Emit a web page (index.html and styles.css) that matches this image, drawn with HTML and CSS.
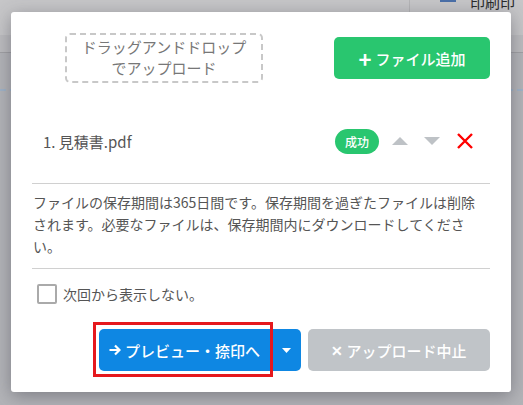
FILE: index.html
```html
<!DOCTYPE html>
<html lang="ja">
<head>
<meta charset="utf-8">
<link rel="stylesheet" href="styles.css">
</head>
<body>
<div class="page">
  <div class="bg-header">
    <div class="bg-divider"></div>
    <svg class="bg-icon" width="16" height="10" viewBox="0 0 16 10"><rect x="2" y="0" width="12" height="3" fill="#4a6fa8"/><rect x="0" y="4" width="16" height="2" fill="#4a6fa8"/></svg>
    <span class="bg-title">印刷印</span>
  </div>
  <div class="bg-subbar"></div>
  <div class="bg-dash"></div>
</div>

<div class="modal">
  <div class="top-row">
    <div class="dropzone">ドラッグアンドドロップ<br>でアップロード</div>
    <button class="btn btn-green"><span class="plus">+</span>ファイル追加</button>
  </div>

  <div class="file-row">
    <span class="file-name">1. 見積書.pdf</span>
    <div class="file-actions">
      <span class="badge">成功</span>
      <svg class="arrow" width="16" height="8" viewBox="0 0 16 8"><polygon points="0,8 8,0 16,8" fill="#bec2c6"/></svg>
      <svg class="arrow" width="16" height="8" viewBox="0 0 16 8"><polygon points="0,0 16,0 8,8" fill="#bec2c6"/></svg>
      <svg class="remove" width="16" height="16" viewBox="0 0 16 16"><path d="M1 1 L15 15 M15 1 L1 15" stroke="#ff0000" stroke-width="2.4" fill="none"/></svg>
    </div>
  </div>

  <p class="notice">ファイルの保存期間は365日間です。保存期間を過ぎたファイルは削除されます。必要なファイルは、保存期間内にダウンロードしてください。</p>

  <label class="check-row"><span class="checkbox"></span>次回から表示しない。</label>

  <div class="btn-row">
    <div class="split">
      <button class="btn btn-blue btn-main">
        <svg width="12" height="12" viewBox="0 0 12 12"><path d="M0.5 6 H10 M6 1.5 L10.5 6 L6 10.5" stroke="#fff" stroke-width="2.2" fill="none"/></svg>
        プレビュー・捺印へ
        <span class="highlight"></span>
      </button>
      <button class="btn btn-blue btn-toggle"><svg width="9" height="5" viewBox="0 0 9 5"><polygon points="0,0 9,0 4.5,5" fill="#fff"/></svg></button>
    </div>
    <button class="btn btn-grey"><span class="x">✕</span>アップロード中止</button>
  </div>
</div>
</body>
</html>
```

FILE: styles.css
```css
html, body {
  margin: 0;
  padding: 0;
}
body {
  width: 523px;
  height: 405px;
  overflow: hidden;
  background: #b3b4b8;
  font-family: "Noto Sans CJK JP", "Noto Sans", sans-serif;
  position: relative;
}
.page {
  height: 405px;
}
.bg-header {
  height: 35px;
  background: #c6c6c8;
  display: flex;
  justify-content: flex-end;
  align-items: flex-start;
  overflow: hidden;
}
.bg-divider {
  width: 1px;
  height: 35px;
  background: #b4b4b6;
  margin-right: 30px;
}
.bg-icon {
  margin-top: -4px;
  margin-right: 14px;
}
.bg-title {
  font-size: 15px;
  line-height: 15px;
  margin-top: -6px;
  margin-right: 8px;
  color: #2a2a2a;
}
.bg-subbar {
  height: 17px;
  background: #bcbcbf;
  border-bottom: 1px solid #a0a0a4;
}
.bg-dash {
  margin-top: 36px;
  border-top: 2px dashed #9fb3c8;
}

.modal {
  position: absolute;
  left: 11px;
  top: 12px;
  width: 458px;
  height: 338px;
  padding: 21px;
  background: #fff;
  border-radius: 3px;
  box-shadow: 0 4px 18px rgba(60, 60, 70, 0.45);
}
.top-row {
  display: flex;
  justify-content: space-between;
  align-items: flex-start;
  height: 70px;
}
.dropzone {
  margin-left: 33px;
  width: 194px;
  height: 45px;
  border: 2px dashed #c8c8c8;
  border-radius: 5px;
  color: #777;
  font-size: 15px;
  line-height: 21px;
  text-align: center;
  padding-top: 1px;
  box-sizing: content-box;
}
.btn {
  border: none;
  font-family: inherit;
  color: #fff;
  font-size: 15px;
  font-weight: 500;
  display: flex;
  align-items: center;
  justify-content: center;
  padding: 0;
  cursor: pointer;
}
.btn-green {
  margin-top: 4px;
  width: 156px;
  height: 42px;
  background: #29c66f;
  border-radius: 5px;
}
.plus {
  font-size: 22px;
  line-height: 20px;
  font-weight: bold;
  margin-right: 4px;
}
.file-row {
  margin-top: 22px;
  height: 32px;
  display: flex;
  align-items: center;
  justify-content: space-between;
  padding: 0 17px 0 11px;
}
.file-name {
  font-size: 15px;
  color: #555;
}
.file-actions {
  display: flex;
  align-items: center;
}
.badge {
  width: 44px;
  height: 25px;
  border-radius: 13px;
  background: #29c66f;
  color: #fff;
  font-size: 12px;
  font-weight: 500;
  display: flex;
  align-items: center;
  justify-content: center;
}
.arrow {
  margin-left: 13px;
}
.arrow + .arrow {
  margin-left: 16px;
}
.remove {
  margin-left: 17px;
}
.notice {
  margin: 26px 0 0 0;
  padding: 7px 11px 11px 1px;
  border-top: 1px solid #d0d0d0;
  border-bottom: 1px solid #d0d0d0;
  font-size: 14px;
  line-height: 22px;
  color: #555;
}
.check-row {
  display: flex;
  align-items: center;
  margin-top: 15px;
  padding-left: 5px;
  font-size: 14px;
  color: #555;
  height: 20px;
}
.checkbox {
  width: 16px;
  height: 16px;
  border: 2px solid #aaa;
  border-radius: 2px;
  margin-right: 6px;
}
.btn-row {
  margin-top: 25px;
  display: flex;
  justify-content: flex-end;
  gap: 7px;
}
.split {
  display: flex;
}
.btn-blue {
  background: #0e87e3;
  height: 42px;
}
.btn-main {
  position: relative;
  width: 171px;
  border-radius: 5px 0 0 5px;
  gap: 4px;
}
.btn-toggle {
  width: 31px;
  border-radius: 0 5px 5px 0;
  border-left: 1px solid #0b78cc;
}
.highlight {
  position: absolute;
  left: -6px;
  top: -7px;
  right: -3px;
  bottom: -6px;
  border: 3px solid #e5181d;
  pointer-events: none;
}
.btn-grey {
  width: 182px;
  height: 42px;
  background: #c0c4c8;
  border-radius: 5px;
}
.x {
  font-size: 14px;
  font-weight: bold;
  margin-right: 3px;
}
```
